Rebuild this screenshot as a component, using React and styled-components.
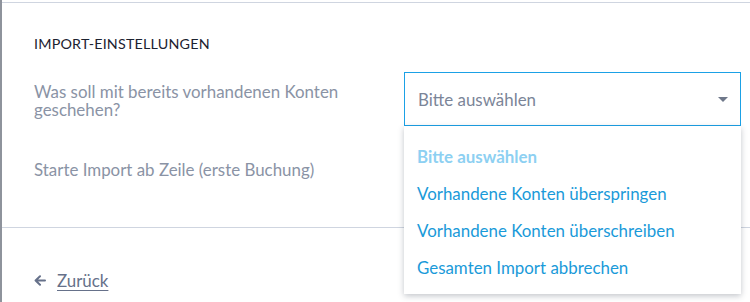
import React from 'react';
import styled, { createGlobalStyle } from 'styled-components';

const GlobalStyle = createGlobalStyle`
  html, body { margin: 0; padding: 0; background: #fff; }
  body { font-family: Lato, "Open Sans", Arial, sans-serif; }
`;

const Panel = styled.div`
  width: 750px;
  height: 302px;
  box-sizing: border-box;
  border-left: 2px solid #8e939c;
  padding-top: 2px;
  overflow: hidden;
`;

const Section = styled.section`
  border-top: 1px solid #cfd5e0;
  border-bottom: 1px solid #cfd5e0;
  padding: 32px 9px 30px 32px;
`;

const Heading = styled.h3`
  margin: 0 0 19px;
  font-size: 14.3px;
  line-height: 18px;
  font-weight: 400;
  letter-spacing: 0.2px;
  color: #1c2230;
`;

const Row = styled.div`
  display: grid;
  grid-template-columns: 370px 1fr;
  align-items: ${p => (p.$top ? 'start' : 'center')};
  margin-top: ${p => p.$gap || 0}px;
`;

const Label = styled.label`
  font-size: 16.9px;
  line-height: 18px;
  color: #8a93a5;
  padding-top: ${p => (p.$top ? 11 : 0)}px;
  padding-right: 30px;
`;

const SelectWrap = styled.div`
  position: relative;
`;

const SelectBox = styled.div`
  height: 54px;
  box-sizing: border-box;
  border: 1px solid ${p => (p.$open ? '#1ba1e6' : '#d9dee7')};
  display: flex;
  align-items: center;
  justify-content: space-between;
  padding: 0 12px 0 13px;
  font-size: 16.9px;
  color: #7b8598;
  background: #fff;
`;

const Caret = styled.span`
  width: 0;
  height: 0;
  border-left: 5px solid transparent;
  border-right: 5px solid transparent;
  border-top: 5px solid #6f788a;
`;

const Menu = styled.ul`
  position: absolute;
  left: 0;
  right: 0;
  top: 54px;
  margin: 0;
  padding: 12px 0 8px;
  list-style: none;
  background: #fff;
  box-shadow: 0 2px 6px rgba(40, 50, 70, 0.28);
  z-index: 5;
`;

const Item = styled.li`
  height: 37px;
  line-height: 37px;
  padding-left: 13px;
  font-size: 16.9px;
  font-weight: ${p => (p.$placeholder ? 700 : 400)};
  color: ${p => (p.$placeholder ? '#8dd0f2' : '#1a9ad9')};
`;

const Footer = styled.div`
  padding: 42px 32px 0;
`;

const BackLink = styled.a`
  display: inline-flex;
  align-items: center;
  gap: 11px;
  font-size: 16.9px;
  color: #66718a;
  cursor: pointer;
  span { text-decoration: underline; text-underline-offset: 3px; }
`;

const options = [
  'Vorhandene Konten überspringen',
  'Vorhandene Konten überschreiben',
  'Gesamten Import abbrechen',
];

export default function App() {
  return (
    <>
      <GlobalStyle />
      <Panel>
        <Section>
          <Heading>IMPORT-EINSTELLUNGEN</Heading>
          <Row $top>
            <Label $top>Was soll mit bereits vorhandenen Konten geschehen?</Label>
            <SelectWrap>
              <SelectBox $open>
                Bitte auswählen
                <Caret />
              </SelectBox>
              <Menu>
                <Item $placeholder>Bitte auswählen</Item>
                {options.map(o => (
                  <Item key={o}>{o}</Item>
                ))}
              </Menu>
            </SelectWrap>
          </Row>
          <Row $gap={17}>
            <Label>Starte Import ab Zeile (erste Buchung)</Label>
            <SelectBox />
          </Row>
        </Section>
        <Footer>
          <BackLink>
            <svg width="12" height="11" viewBox="0 0 12 11" fill="none">
              <path d="M11 5.5H2M6 1.3L1.6 5.5 6 9.7" stroke="#66718a" strokeWidth="2" strokeLinecap="round" strokeLinejoin="round" />
            </svg>
            <span>Zurück</span>
          </BackLink>
        </Footer>
      </Panel>
    </>
  );
}
